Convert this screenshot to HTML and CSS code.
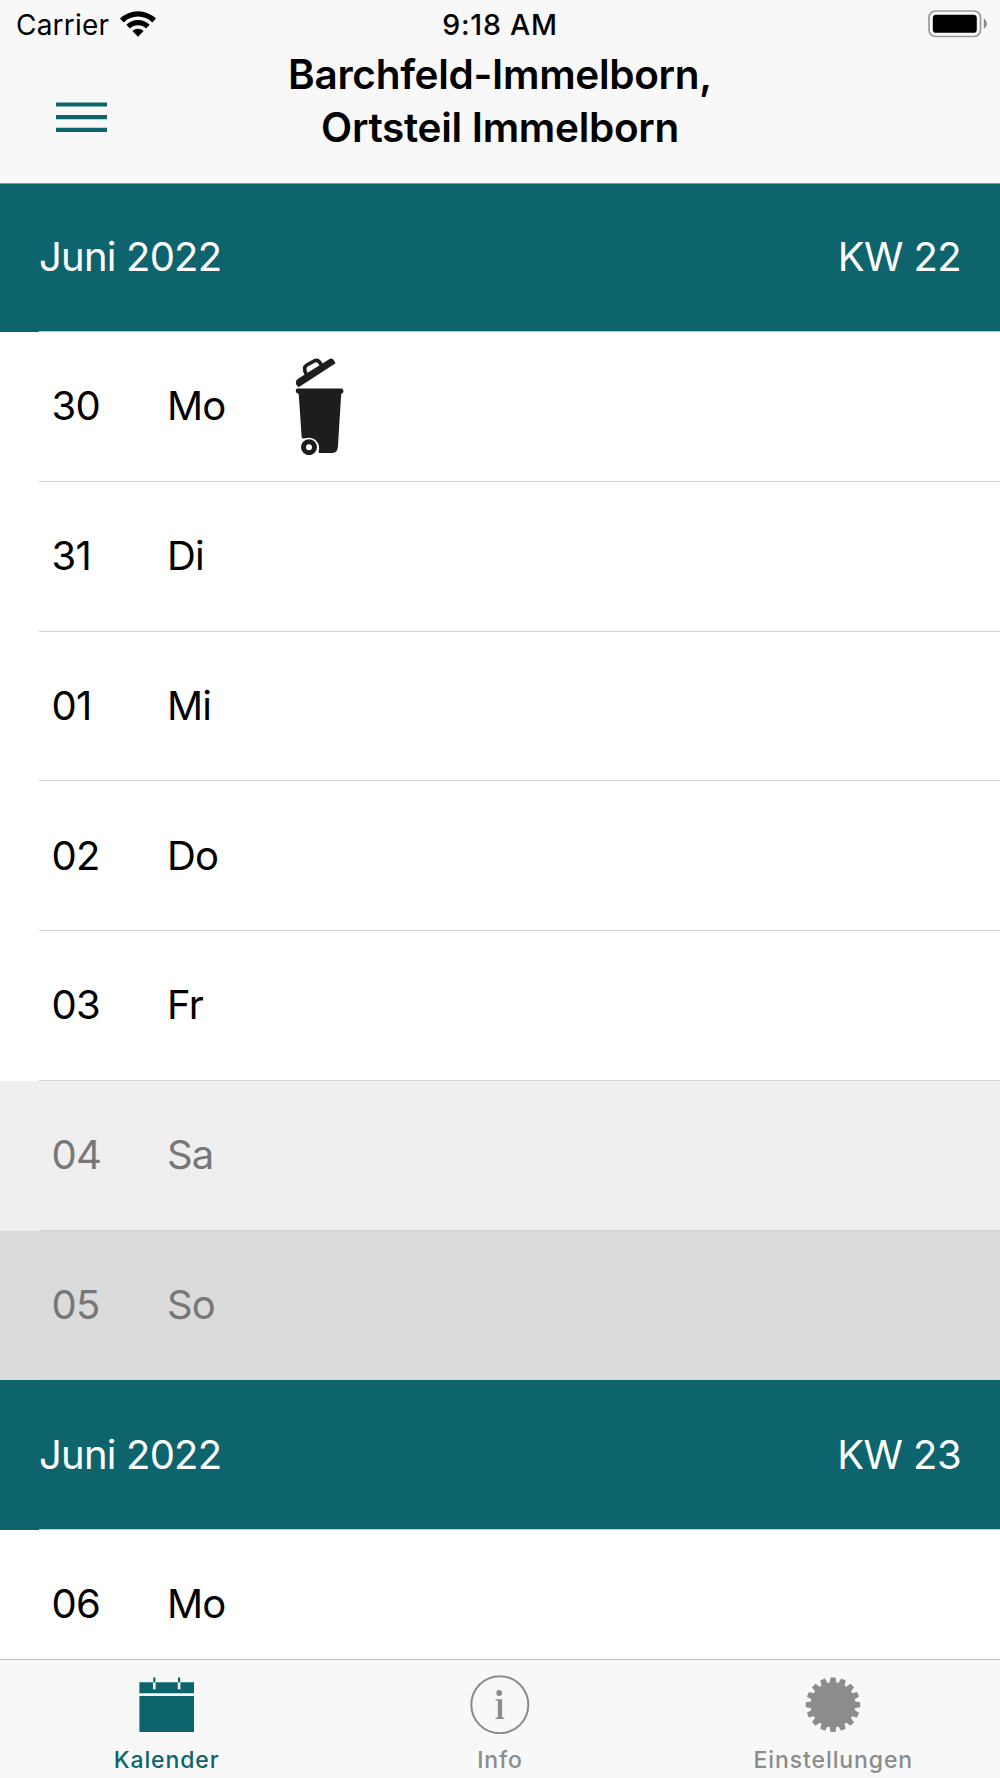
FILE: index.html
```
<!DOCTYPE html>
<html lang="de">
<head>
    <meta charset="UTF-8">
    <meta name="viewport" content="width=device-width, initial-scale=1.0">
    <title>Abfallkalender</title>
    <link rel="stylesheet" href="styles.css">
</head>
<body>

<header class="header">
    <div class="status-bar">
        <div class="carrier">
            <span class="carrier-name">Carrier</span>
            <svg class="wifi" width="38" height="28" viewBox="0 0 38 28">
                <path d="M1 8.5A26 26 0 0 1 37 8.5L33.3 12.4A20.5 20.5 0 0 0 4.7 12.4Z"/>
                <path d="M7.3 14.7A16.8 16.8 0 0 1 30.7 14.7L27 18.4A11.5 11.5 0 0 0 11 18.4Z"/>
                <path d="M13.4 21A8 8 0 0 1 24.6 21L19 26.8Z"/>
            </svg>
        </div>
        <span class="time">9:18 AM</span>
        <div class="battery-wrap">
            <svg width="60" height="28" viewBox="0 0 60 28">
                <rect x="1" y="1" width="51.5" height="25.5" rx="6.5" fill="none" stroke="#999" stroke-width="1.7"/>
                <rect x="4.8" y="4.8" width="44" height="18" rx="3.4"/>
                <path d="M55.8 8.8C59.8 10.5 59.8 17 55.8 18.7Z" fill="#8c8c8c"/>
            </svg>
        </div>
    </div>
    <div class="nav-bar">
        <button class="menu" aria-label="Menü">
            <svg width="51" height="30" viewBox="0 0 51 30">
                <path d="M0 2.5H51M0 15.2H51M0 27.9H51"/>
            </svg>
        </button>
        <h1 class="title">Barchfeld-Immelborn,<br>Ortsteil Immelborn</h1>
    </div>
</header>

<main class="calendar">
    <div class="week first">
        <div class="week-inner"><span>Juni 2022</span><span class="kw">KW 22</span></div>
    </div>
    <div class="day">
        <div class="day-inner">
            <span class="date">30</span><span class="name">Mo</span>
            <svg class="bin" width="50" height="98" viewBox="0 0 50 98">
                <path d="M1.2 27.2Q0 24 3 21.7L35 1.8Q37 .6 38.7 2.9L40.6 6.2L4.4 29.8Q2.6 30.5 1.2 27.2Z"/>
                <path d="M11.4 17.5Q7.6 10.6 11.9 8L19.7 3.7Q23.7 2.3 26.4 8.3" fill="none" stroke="#1d1d1b" stroke-width="3.6"/>
                <path d="M2 31.6H47Q49.3 33.3 48 35.7L46.2 37L42.9 90Q42.2 95.8 37.5 96H24.2Q23.2 95.5 23.8 93.7C26 85.5 18.5 78.3 9.2 81.4Q7 82 6.7 80.5L3.7 37L1.2 35.5Q0 33 2 31.6Z"/>
                <circle cx="14" cy="90.2" r="5.5" fill="none" stroke="#1d1d1b" stroke-width="5"/>
            </svg>
        </div>
    </div>
    <div class="day"><div class="day-inner"><span class="date">31</span><span class="name">Di</span></div></div>
    <div class="day"><div class="day-inner"><span class="date">01</span><span class="name">Mi</span></div></div>
    <div class="day"><div class="day-inner"><span class="date">02</span><span class="name">Do</span></div></div>
    <div class="day"><div class="day-inner"><span class="date">03</span><span class="name">Fr</span></div></div>
    <div class="day saturday"><div class="day-inner"><span class="date">04</span><span class="name">Sa</span></div></div>
    <div class="day sunday"><div class="day-inner"><span class="date">05</span><span class="name">So</span></div></div>
    <div class="week">
        <div class="week-inner"><span>Juni 2022</span><span class="kw">KW 23</span></div>
    </div>
    <div class="day"><div class="day-inner"><span class="date">06</span><span class="name">Mo</span></div></div>
</main>

<nav class="tab-bar">
    <a class="tab active">
        <svg width="60" height="60" viewBox="0 0 60 60">
            <path d="M2.4 8.3H57V19.3H2.4ZM2.4 22H57V58H2.4Z"/>
            <path d="M16 8.3H18.6V15.3H16ZM40.8 8.3H43.4V15.3H40.8Z" fill="#f8f8f8"/>
            <path d="M16.2 3.5H18.4V8.3H16.2ZM41 3.5H43.2V8.3H41Z"/>
        </svg>
        <span>Kalender</span>
    </a>
    <a class="tab">
        <svg width="60" height="60" viewBox="0 0 60 60">
            <circle cx="29.8" cy="30.7" r="28.5" fill="none" stroke="#8c8c8c" stroke-width="2"/>
            <circle cx="29.2" cy="19" r="2.9"/>
            <path d="M25.4 25.2H32.1V42.8Q32.1 43.8 34.2 43.9V45H25.3V43.9Q27.8 43.8 27.8 42.8V27.5Q27.8 26.4 25.4 26.3Z"/>
        </svg>
        <span>Info</span>
    </a>
    <a class="tab">
        <svg width="60" height="60" viewBox="0 0 60 60">
            <defs>
                <path id="tooth" d="M-3.5 -21L-2.5 -27.2H2.5L3.5 -21V21L2.5 27.2H-2.5L-3.5 21Z"/>
            </defs>
            <g transform="translate(30 30.7)">
                <circle r="22.4"/>
                <use href="#tooth"/>
                <use href="#tooth" transform="rotate(22.5)"/>
                <use href="#tooth" transform="rotate(45)"/>
                <use href="#tooth" transform="rotate(67.5)"/>
                <use href="#tooth" transform="rotate(90)"/>
                <use href="#tooth" transform="rotate(112.5)"/>
                <use href="#tooth" transform="rotate(135)"/>
                <use href="#tooth" transform="rotate(157.5)"/>
            </g>
        </svg>
        <span>Einstellungen</span>
    </a>
</nav>

</body>
</html>
```
FILE: styles.css
```
* {
    box-sizing: border-box;
}
body {
    font-family: Inter, "Liberation Sans", sans-serif;
    display: flex;
    flex-direction: column;
    height: 100vh;
    margin: 0;
    overflow: hidden;
    background-color: #fff;
    color: #000;
}
svg {
    display: block;
    flex: none;
}
.header {
    flex: none;
    height: 184px;
    background-color: #f8f8f8;
    border-bottom: 1px solid #7f9c9e;
}
.status-bar {
    display: grid;
    grid-template-columns: 1fr auto 1fr;
    align-items: center;
    height: 48px;
    padding: 0 12px;
    font-size: 28px;
    line-height: 46px;
}
.carrier {
    display: flex;
    align-items: center;
    gap: 10px;
    padding-left: 4px;
    letter-spacing: 0.2px;
}
.carrier-name {
    padding-top: 2px;
}
.time {
    padding-top: 2px;
    font-size: 28.5px;
    font-weight: 500;
    letter-spacing: 0.75px;
}
.battery-wrap {
    display: flex;
    justify-content: flex-end;
}
.nav-bar {
    display: grid;
    grid-template-columns: 200px 1fr 200px;
    height: 135px;
}
.menu {
    align-self: start;
    margin: 54px 0 0 56px;
    padding: 0;
    border: none;
    background: none;
}
.menu path {
    stroke: #0d646c;
    stroke-width: 4.2;
}
.title {
    margin: 0;
    font-size: 40.5px;
    font-weight: 600;
    line-height: 53px;
    letter-spacing: -0.3px;
    text-align: center;
    white-space: nowrap;
}
.calendar {
    flex: 1;
    min-height: 0;
    overflow: hidden;
    font-size: 40px;
    letter-spacing: -0.8px;
}
.week {
    height: 149.75px;
    padding-left: 39px;
    background-color: #0d646c;
    color: #fff;
}
.week.first {
    height: 148px;
}
.week-inner,
.day-inner {
    display: flex;
    align-items: center;
    height: 100%;
    padding-bottom: 1px;
    border-bottom: 1px solid #c8c7cc;
}
.week.first .week-inner {
    padding-bottom: 2px;
}
.week-inner {
    justify-content: space-between;
    padding-right: 39px;
}
.kw {
    letter-spacing: -0.6px;
}
.day {
    height: 149.75px;
    padding-left: 39px;
}
.day-inner {
    padding-left: 12.5px;
    border-bottom-color: #d3d2d6;
}
.date {
    width: 115.5px;
}
.name {
    width: 128px;
}
.bin {
    fill: #1d1d1b;
}
.saturday {
    background-color: #efefef;
    color: #777;
}
.sunday {
    background-color: #dbdbdb;
    color: #777;
}
.tab-bar {
    display: flex;
    flex: none;
    height: 119px;
    background-color: #f8f8f8;
    border-top: 1px solid #c0c0c0;
}
.tab {
    flex: 1;
    display: flex;
    flex-direction: column;
    align-items: center;
    padding-top: 14px;
    color: #8c8c8c;
    fill: #8c8c8c;
    font-size: 23px;
    font-weight: 500;
    line-height: 28px;
    letter-spacing: 0.9px;
}
.tab span {
    margin-top: 12px;
}
.tab.active {
    color: #0d646c;
    fill: #0d646c;
}
```
